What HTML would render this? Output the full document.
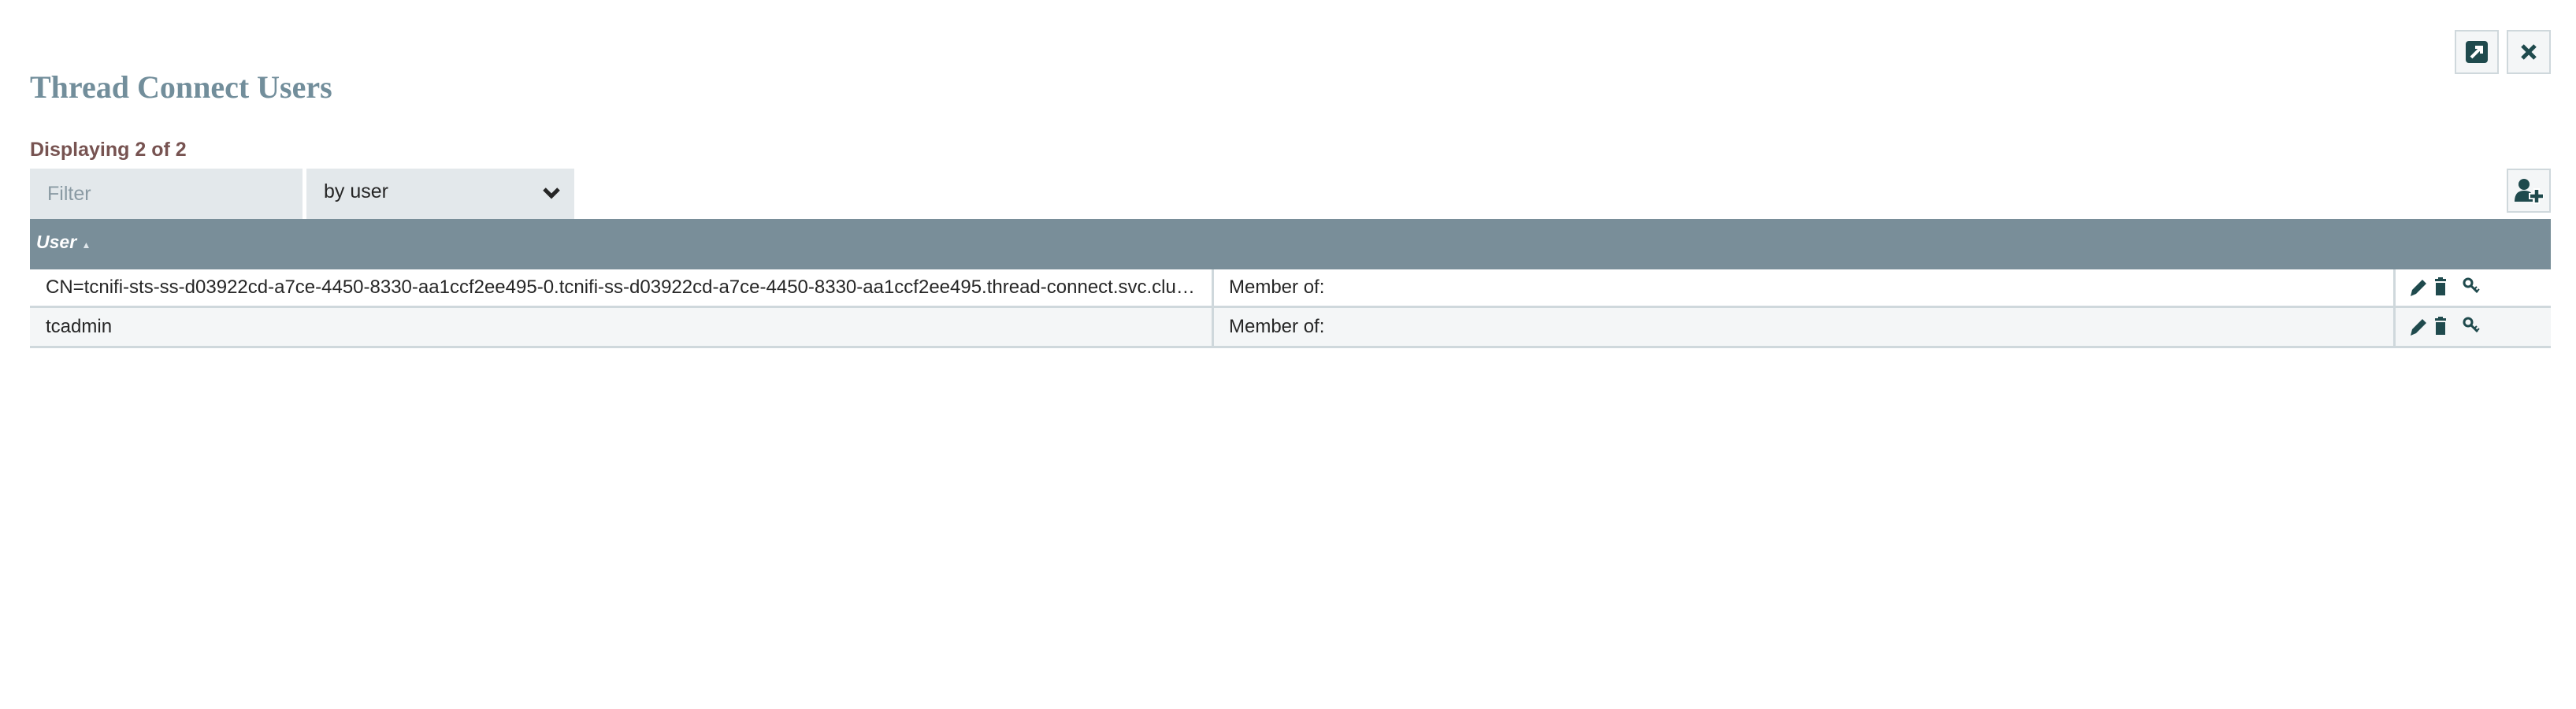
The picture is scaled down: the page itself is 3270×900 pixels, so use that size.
<!DOCTYPE html>
<html><head><meta charset="utf-8"><style>
*{box-sizing:border-box;margin:0;padding:0}
body{width:3270px;height:900px;background:#fff;font-family:"Liberation Sans",sans-serif;position:relative;overflow:hidden}
.a{position:absolute}
.btn{position:absolute;width:56px;height:56px;border:2px solid #cfd8dc;background:#f4f6f7;display:flex;align-items:center;justify-content:center}
.cell{position:absolute;font-size:24px;color:#262626;white-space:nowrap;overflow:hidden;text-overflow:ellipsis;line-height:48px}
</style></head><body>
<div class="btn" style="left:3116px;top:38px"><svg width="28" height="28" viewBox="0 0 28 28"><rect x="0" y="0" width="28" height="28" rx="4" fill="#1f4a4d"/><path d="M7 21 L19 9 M12 8 H20 V16" stroke="#fff" stroke-width="4" fill="none"/></svg></div>
<div class="btn" style="left:3182px;top:38px"><svg width="24" height="24" viewBox="0 0 24 24"><path d="M4 4 L20 20 M20 4 L4 20" stroke="#1f4a4d" stroke-width="5"/></svg></div>
<div class="a" style="left:38px;top:87px;font-family:'Liberation Serif',serif;font-weight:bold;font-size:40px;color:#728e9b">Thread Connect Users</div>
<div class="a" style="left:38px;top:176px;font-size:25px;font-weight:bold;color:#775351">Displaying 2 of 2</div>
<div class="a" style="left:38px;top:214px;width:346px;height:64px;background:#e3e8eb;font-size:25px;color:#8a9aa3;padding:18px 0 0 22px">Filter</div>
<div class="a" style="left:389px;top:214px;width:340px;height:64px;background:#e3e8eb;font-size:25px;color:#262626;padding:15px 0 0 22px">by user</div>
<svg class="a" style="left:688px;top:235px" width="24" height="20" viewBox="0 0 24 20"><path d="M3 5 L12 14 L21 5" stroke="#262626" stroke-width="5" fill="none"/></svg>
<div class="btn" style="left:3182px;top:214px"><svg width="38" height="34" viewBox="0 0 38 34"><circle cx="13" cy="9" r="7" fill="#1f4a4d"/><path d="M1 31 Q1 17 13 17 Q22 17 24 23 V31 Z" fill="#1f4a4d"/><path d="M29 14 V34 M19 24 H38" stroke="#fff" stroke-width="8"/><path d="M29 16 V32 M21 24 H37" stroke="#1f4a4d" stroke-width="4.5"/></svg></div>
<div class="a" style="left:38px;top:278px;width:3200px;height:64px;background:#798e99"></div>
<div class="a" style="left:46px;top:294px;font-size:23px;font-style:italic;font-weight:bold;color:#fff">User <span style="font-size:12px;font-style:normal;color:#dfe6ea">▲</span></div>
<div class="a" style="left:38px;top:342px;width:3200px;height:49px;background:#fff;border-bottom:3px solid #cfd8dc"></div>
<div class="a" style="left:38px;top:391px;width:3200px;height:51px;background:#f4f6f7;border-bottom:3px solid #cfd8dc"></div>
<div class="a" style="left:1538px;top:342px;width:3px;height:100px;background:#cfd8dc"></div>
<div class="a" style="left:3038px;top:342px;width:3px;height:100px;background:#cfd8dc"></div>
<div class="cell" style="left:58px;top:341px;width:1470px">CN=tcnifi-sts-ss-d03922cd-a7ce-4450-8330-aa1ccf2ee495-0.tcnifi-ss-d03922cd-a7ce-4450-8330-aa1ccf2ee495.thread-connect.svc.cluster.local</div>
<div class="cell" style="left:58px;top:391px">tcadmin</div>
<div class="cell" style="left:1560px;top:341px">Member of:</div>
<div class="cell" style="left:1560px;top:391px">Member of:</div>
<svg class="a" style="left:3058px;top:350px" width="96" height="80" viewBox="0 0 96 80">
<g id="ic" fill="#1f4a4d">
<path d="M2 26 L4 18 L17 5 L22 10 L9 23 Z"/>
<rect x="33" y="4" width="14" height="3"/><rect x="37" y="2" width="6" height="3"/>
<path d="M34 9 H46 V25 H34 Z" />
<circle cx="75" cy="9" r="5" fill="none" stroke="#1f4a4d" stroke-width="3"/>
<path d="M78 12 L87 21" stroke="#1f4a4d" stroke-width="3"/><path d="M83 17 L86 14 M86 20 L89 17" stroke="#1f4a4d" stroke-width="2"/>
</g>
<use href="#ic" y="50"/>
</svg>
</body></html>
